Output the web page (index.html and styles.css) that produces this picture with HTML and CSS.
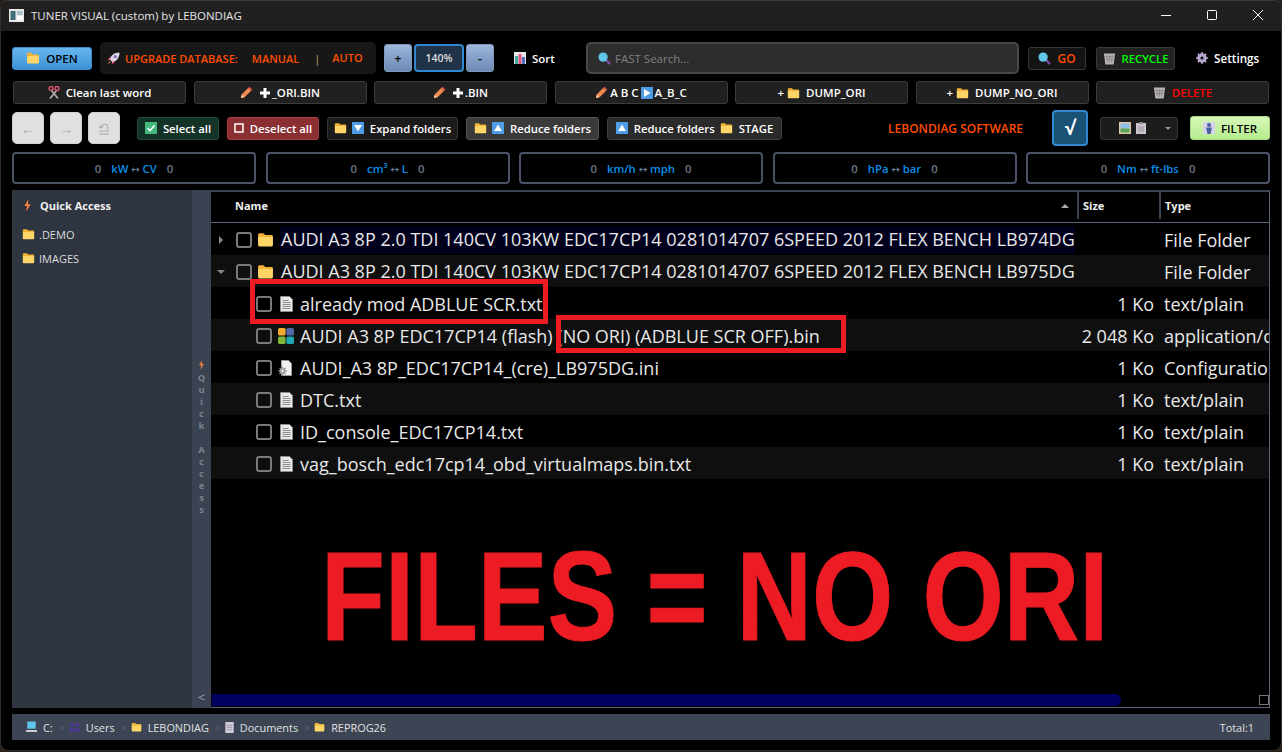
FILE: index.html
```html
<!DOCTYPE html>
<html lang="en">
  <head>
    <meta charset="utf-8" />
    <title>TUNER VISUAL (custom) by LEBONDIAG</title>
    <link rel="stylesheet" href="styles.css">
  </head>
  <body>
    <svg class="defs" width="0" height="0">
      <defs>
        <symbol id="folder" viewBox="0 0 16 14">
          <path d="M1 2.5C1 1.7 1.6 1 2.4 1h3.7l1.6 1.8h6c.7 0 1.3.6 1.3 1.3V5H1z" fill="#f2b233"/>
          <path d="M1 4.6h14v7.6c0 .7-.6 1.3-1.3 1.3H2.3c-.7 0-1.3-.6-1.3-1.3z" fill="#ffd568"/>
        </symbol>
        <symbol id="doc" viewBox="0 0 13 16">
          <path d="M.5 .5h9l3 3v12H.5z" fill="#e9e9e9" stroke="#8d8d8d"/>
          <path d="M2.500 4.500h6M2.500 6.500h8M2.500 8.500h8M2.500 10.500h8M2.500 12.500h8" stroke="#8d8d8d"/>
        </symbol>
        <symbol id="cfg" viewBox="0 0 14 16">
          <path d="M3.500 .5h7l3 3v12h-10z" fill="#f0f0f0" stroke="#999"/>
          <path d="M4.500 6.800v8.400M.3 11h8.400M1.500 8l6 6M7.500 8l-6 6" stroke="#8a8a8a" stroke-width="1.300"/>
          <circle cx="4.500" cy="11" r="2.800" fill="#a0a0a0"/>
          <circle cx="4.500" cy="11" r="1.200" fill="#eee"/>
        </symbol>
        <symbol id="blocks" viewBox="0 0 16 16">
          <rect x="0" y="0" width="7.600" height="7.600" rx="1.500" fill="#eeab2e"/>
          <rect x="8.400" y="0" width="7.600" height="7.600" rx="1.500" fill="#5268a8"/>
          <rect x="0" y="8.400" width="7.600" height="7.600" rx="1.500" fill="#7fb53c"/>
          <rect x="8.400" y="8.400" width="7.600" height="7.600" rx="1.500" fill="#21a9b3"/>
        </symbol>
        <symbol id="pencil" viewBox="0 0 14 14">
          <path d="M1 13l1-4 7-7 3 3-7 7z" fill="#ee8a4f"/>
          <path d="M9 2l1.300-1.300 3 3L12 5z" fill="#e2574c"/>
          <path d="M1 13l1-3.500L4.500 12z" fill="#f5d0a9"/>
        </symbol>
        <symbol id="plus" viewBox="0 0 12 12">
          <path d="M4.500 1h3v3.500H11v3H7.500V11h-3V7.500H1v-3h3.500z" fill="#fff"/>
        </symbol>
        <symbol id="bolt" viewBox="0 0 10 14">
          <path d="M6 0L1.500 7.500H4.500L3.500 14 8.500 5.500H5.500z" fill="#f0803c"/>
        </symbol>
        <symbol id="lens" viewBox="0 0 14 14">
          <path d="M8.500 8.500l4.500 4.500" stroke="#7d4aa0" stroke-width="2.500"/>
          <circle cx="5.500" cy="5.500" r="5" fill="#62c6ea"/>
        </symbol>
        <symbol id="bin" viewBox="0 0 14 14">
          <path d="M1 1.500h12l-1.500 12h-9z" fill="#b9b4b8"/>
          <path d="M4 3.500l1 8M7 3.500v8M10 3.500l-1 8M2.500 5h9M3 8h8" stroke="#7a767a" stroke-width=".7"/>
        </symbol>
        <symbol id="up" viewBox="0 0 12 12">
          <rect width="12" height="12" fill="#4e9be6"/>
          <path d="M6 2.500l4 6.500H2z" fill="#fff"/>
        </symbol>
        <symbol id="down" viewBox="0 0 12 12">
          <rect width="12" height="12" fill="#4e9be6"/>
          <path d="M6 9.500l4-6.500H2z" fill="#fff"/>
        </symbol>
      </defs>
    </svg>

    <div class="window">
      <header class="titlebar">
        <svg class="appicon" width="15" height="13" viewBox="0 0 15 13">
          <rect width="15" height="13" fill="#e8e8e8"/>
          <rect x="1.500" y="2" width="5" height="9" fill="#3d6f78"/>
          <rect x="8" y="2" width="5.500" height="4" fill="#a8c0c8"/>
          <rect x="8" y="7" width="5.500" height="4" fill="#fff"/>
        </svg>
        <span class="apptitle">TUNER VISUAL (custom) by LEBONDIAG</span>
        <div class="winctl">
          <svg width="12" height="12" viewBox="0 0 12 12"><path d="M1 6.500h10" stroke="#fff"/></svg>
          <svg width="12" height="12" viewBox="0 0 12 12"><rect x="1.500" y="1.500" width="9" height="9" rx="1" fill="none" stroke="#fff"/></svg>
          <svg width="12" height="12" viewBox="0 0 12 12"><path d="M1 1l10 10M11 1L1 11" stroke="#fff"/></svg>
        </div>
      </header>

      <div class="content">
        <div class="row row-one">
          <button class="btn btn-open"><svg class="ic" width="14" height="12"><use href="#folder"/></svg>OPEN</button>
          <div class="upgrade">
            <svg class="ic-rocket" width="13" height="13" viewBox="0 0 14 14">
              <path d="M13.500 .5C8 .5 4 3.500 3 8l3 3c4.500-1 7.500-5 7.500-10.500z" fill="#dcd8e4"/>
              <circle cx="9" cy="5" r="1.700" fill="#8c6fc0"/>
              <path d="M3.500 5L.5 9l3-.5zM9 10.500L5 13.500l.5-3z" fill="#e8487a"/>
              <path d="M.5 13.500l2.500-3.500 1 1z" fill="#f0803c"/>
            </svg>
            <span class="orange">UPGRADE DATABASE:</span>
            <span class="orange manual">MANUAL</span>
            <span class="pipe">|</span>
            <span class="orange auto">AUTO</span>
          </div>
          <div class="zoomgroup">
            <button class="btn-zoom">+</button>
            <span class="zoomval">140%</span>
            <button class="btn-zoom">-</button>
          </div>
          <div class="sortlabel">
            <svg class="ic" width="12" height="12" viewBox="0 0 12 12">
              <rect width="12" height="12" fill="#e8e8e8"/>
              <rect x="1" y="4" width="3" height="8" fill="#3fa79b"/>
              <rect x="4.500" y="2" width="3" height="10" fill="#e0527f"/>
              <rect x="8" y="5" width="3" height="7" fill="#4a6fc0"/>
            </svg>Sort
          </div>
          <div class="search">
            <svg class="ic" width="13" height="13"><use href="#lens"/></svg>FAST Search...
          </div>
          <button class="btn btn-go"><svg class="ic" width="13" height="13"><use href="#lens"/></svg><span class="orange">GO</span></button>
          <button class="btn btn-recycle"><svg class="ic" width="13" height="13"><use href="#bin"/></svg><span class="green">RECYCLE</span></button>
          <div class="settings">
            <svg class="ic" width="12" height="12" viewBox="0 0 12 12">
              <circle cx="6" cy="6" r="3.500" fill="none" stroke="#b9a9d0" stroke-width="2.500"/>
              <path d="M6 0v12M0 6h12M1.800 1.800l8.400 8.400M10.200 1.800l-8.400 8.400" stroke="#b9a9d0" stroke-width="1.500"/>
              <circle cx="6" cy="6" r="1.500" fill="#000"/>
            </svg>Settings
          </div>
        </div>

        <div class="row row-two">
          <button class="btn btn-wide">
            <svg class="ic" width="12" height="13" viewBox="0 0 12 13">
              <path d="M3 4l7 8.500M9 4L2 12.500" stroke="#b8b0b0" stroke-width="1.500"/>
              <circle cx="3" cy="2.500" r="2" fill="none" stroke="#d8566c" stroke-width="1.400"/>
              <circle cx="9" cy="2.500" r="2" fill="none" stroke="#d8566c" stroke-width="1.400"/>
            </svg>Clean last word
          </button>
          <button class="btn btn-wide"><svg class="ic" width="13" height="13"><use href="#pencil"/></svg><svg class="ic-plus" width="12" height="12"><use href="#plus"/></svg>_ORI.BIN</button>
          <button class="btn btn-wide"><svg class="ic" width="13" height="13"><use href="#pencil"/></svg><svg class="ic-plus" width="12" height="12"><use href="#plus"/></svg>.BIN</button>
          <button class="btn btn-wide tight">
            <svg width="13" height="13"><use href="#pencil"/></svg>A B C<svg width="12" height="12" viewBox="0 0 12 12"><rect width="12" height="12" fill="#4e9be6"/><path d="M3 2l6.500 4L3 10z" fill="#fff"/></svg>A_B_C
          </button>
          <button class="btn btn-wide"><span class="small-plus">+</span><svg class="ic" width="13" height="12"><use href="#folder"/></svg>DUMP_ORI</button>
          <button class="btn btn-wide"><span class="small-plus">+</span><svg class="ic" width="13" height="12"><use href="#folder"/></svg>DUMP_NO_ORI</button>
          <button class="btn btn-wide"><svg class="ic" width="13" height="13"><use href="#bin"/></svg><span class="red">DELETE</span></button>
        </div>

        <div class="row row-three">
          <div class="navgroup">
            <button class="btn-nav">&#8592;</button>
            <button class="btn-nav">&#8594;</button>
            <button class="btn-nav">
              <svg width="12" height="13" viewBox="0 0 12 13">
                <path d="M3 6a3.500 3.500 0 1 1 6.500 1.500M3 6L1 4M3 6l2-1.500" fill="none" stroke="#aaa" stroke-width="1.100"/>
                <path d="M1 9h10M1 12h10" stroke="#aaa" stroke-width="1.100"/>
              </svg>
            </button>
          </div>
          <button class="btn btn-select">
            <svg class="ic" width="12" height="12" viewBox="0 0 12 12"><rect width="12" height="12" fill="#42b87c"/><path d="M2.500 6l2.500 2.500 4.500-5" fill="none" stroke="#fff" stroke-width="1.600"/></svg>Select all
          </button>
          <button class="btn btn-deselect">
            <svg class="ic" width="10" height="10" viewBox="0 0 10 10"><rect x="1" y="1" width="8" height="8" fill="none" stroke="#fff" stroke-width="1.500"/></svg>Deselect all
          </button>
          <button class="btn btn-tool"><svg class="ic gap5" width="13" height="12"><use href="#folder"/></svg><svg class="ic" width="12" height="12"><use href="#down"/></svg>Expand folders</button>
          <button class="btn btn-tool active"><svg class="ic gap5" width="13" height="12"><use href="#folder"/></svg><svg class="ic" width="12" height="12"><use href="#up"/></svg>Reduce folders</button>
          <button class="btn btn-tool lighter"><svg class="ic" width="12" height="12"><use href="#up"/></svg>Reduce folders<svg class="ic ic-mid" width="13" height="12"><use href="#folder"/></svg>STAGE</button>
          <span class="brand orange">LEBONDIAG SOFTWARE</span>
          <button class="btn-check">&#8730;</button>
          <div class="combo">
            <svg width="12" height="12" viewBox="0 0 12 12"><rect width="12" height="12" fill="#d9c9a8"/><rect x="1.500" y="1.500" width="9" height="5" fill="#8cc0e8"/><rect x="1.500" y="6.500" width="9" height="4" fill="#5aa55a"/></svg>
            <svg width="10" height="12" viewBox="0 0 10 12"><rect y="1" width="10" height="11" fill="#cfc4d4"/><rect x="3" width="4" height="2" fill="#888"/><path d="M2 5h6M2 7h6M2 9h6" stroke="#999"/></svg>
            <span class="caret"></span>
          </div>
          <button class="btn-filter">
            <svg class="ic" width="12" height="12" viewBox="0 0 12 12"><rect width="12" height="12" fill="#d6d2ea"/><circle cx="6" cy="3" r="2" fill="#4a5fa0"/><path d="M3 5.500h6L7.500 12h-3z" fill="#4a5fa0"/></svg>FILTER
          </button>
        </div>

        <div class="row row-four">
          <div class="conv"><span>0</span><b>kW <i class="arr">&#8596;</i> CV</b><span>0</span></div>
          <div class="conv"><span>0</span><b>cm&#179; <i class="arr">&#8596;</i> L</b><span>0</span></div>
          <div class="conv"><span>0</span><b>km/h <i class="arr">&#8596;</i> mph</b><span>0</span></div>
          <div class="conv"><span>0</span><b>hPa <i class="arr">&#8596;</i> bar</b><span>0</span></div>
          <div class="conv"><span>0</span><b>Nm <i class="arr">&#8596;</i> ft-lbs</b><span>0</span></div>
        </div>

        <div class="main">
          <aside class="sidebar">
            <div class="side-title"><svg width="9" height="13"><use href="#bolt"/></svg>Quick Access</div>
            <div class="side-item"><svg width="13" height="12"><use href="#folder"/></svg>.DEMO</div>
            <div class="side-item"><svg width="13" height="12"><use href="#folder"/></svg>IMAGES</div>
          </aside>

          <div class="splitter">
            <svg width="7" height="10"><use href="#bolt"/></svg>
            <div class="vtext">
              <span>Q</span><span>u</span><span>i</span><span>c</span><span>k</span><span>&nbsp;</span>
              <span>A</span><span>c</span><span>c</span><span>e</span><span>s</span><span>s</span>
            </div>
            <div class="collapse">&lt;</div>
          </div>

          <section class="tree">
            <div class="tree-head">
              <div class="th th-name">Name<span class="sort-up"></span></div>
              <div class="th">Size</div>
              <div class="th">Type</div>
            </div>

            <div class="tree-row">
              <div class="cell-name">
                <span class="arrow arrow-right"></span><span class="check"></span>
                <svg width="17" height="15"><use href="#folder"/></svg>
                <span class="fname hovered">AUDI A3 8P 2.0 TDI 140CV 103KW EDC17CP14 0281014707 6SPEED 2012 FLEX BENCH LB974DG</span>
              </div>
              <div class="cell-size"></div>
              <div class="cell-type">File Folder</div>
            </div>
            <div class="tree-row alt">
              <div class="cell-name">
                <span class="arrow arrow-down"></span><span class="check"></span>
                <svg width="17" height="15"><use href="#folder"/></svg>
                <span class="fname">AUDI A3 8P 2.0 TDI 140CV 103KW EDC17CP14 0281014707 6SPEED 2012 FLEX BENCH LB975DG</span>
              </div>
              <div class="cell-size"></div>
              <div class="cell-type">File Folder</div>
            </div>
            <div class="tree-row">
              <div class="cell-name child">
                <span class="check"></span><svg class="i-doc" width="13" height="16"><use href="#doc"/></svg>
                <span>already mod ADBLUE SCR.txt</span>
              </div>
              <div class="cell-size">1 Ko</div>
              <div class="cell-type">text/plain</div>
            </div>
            <div class="tree-row alt">
              <div class="cell-name child">
                <span class="check"></span><svg class="i-blocks" width="16" height="16"><use href="#blocks"/></svg>
                <span>AUDI A3 8P EDC17CP14 (flash) (NO ORI) (ADBLUE SCR OFF).bin</span>
              </div>
              <div class="cell-size">2 048 Ko</div>
              <div class="cell-type">application/octet-stream</div>
            </div>
            <div class="tree-row">
              <div class="cell-name child">
                <span class="check"></span><svg class="i-cfg" width="14" height="16"><use href="#cfg"/></svg>
                <span>AUDI_A3 8P_EDC17CP14_(cre)_LB975DG.ini</span>
              </div>
              <div class="cell-size">1 Ko</div>
              <div class="cell-type">Configuration</div>
            </div>
            <div class="tree-row alt">
              <div class="cell-name child">
                <span class="check"></span><svg class="i-doc" width="13" height="16"><use href="#doc"/></svg>
                <span>DTC.txt</span>
              </div>
              <div class="cell-size">1 Ko</div>
              <div class="cell-type">text/plain</div>
            </div>
            <div class="tree-row">
              <div class="cell-name child">
                <span class="check"></span><svg class="i-doc" width="13" height="16"><use href="#doc"/></svg>
                <span>ID_console_EDC17CP14.txt</span>
              </div>
              <div class="cell-size">1 Ko</div>
              <div class="cell-type">text/plain</div>
            </div>
            <div class="tree-row alt">
              <div class="cell-name child">
                <span class="check"></span><svg class="i-doc" width="13" height="16"><use href="#doc"/></svg>
                <span>vag_bosch_edc17cp14_obd_virtualmaps.bin.txt</span>
              </div>
              <div class="cell-size">1 Ko</div>
              <div class="cell-type">text/plain</div>
            </div>

            <div class="mark mark-one"></div>
            <div class="mark mark-two"></div>
            <div class="bigtext">FILES = NO ORI</div>

            <div class="hscroll">
              <div class="hscroll-thumb"></div>
              <span class="hscroll-end"></span>
            </div>
          </section>
        </div>

        <footer class="statusbar">
          <span class="crumb">
            <svg width="11" height="12" viewBox="0 0 13 13"><rect x="1.500" width="10" height="8.500" fill="#5cc6ec"/><path d="M0 10h13v2.500H0z" fill="#c8ccd4"/></svg>C:
          </span>
          <i class="sep"></i>
          <span class="crumb">
            <svg width="11" height="10" viewBox="0 0 13 11"><circle cx="3.500" cy="3" r="2.500" fill="#4d3a8c"/><circle cx="9.500" cy="3" r="2.500" fill="#4d3a8c"/><path d="M0 11V7h6v4zM7 11V7h6v4z" fill="#4d3a8c"/></svg>Users
          </span>
          <i class="sep"></i>
          <span class="crumb"><svg width="11" height="10"><use href="#folder"/></svg>LEBONDIAG</span>
          <i class="sep"></i>
          <span class="crumb">
            <svg width="9" height="11" viewBox="0 0 10 13"><rect width="10" height="13" fill="#cfc8d8"/><path d="M2 4h6M2 6.500h6M2 9h6" stroke="#9a94a6"/></svg>Documents
          </span>
          <i class="sep"></i>
          <span class="crumb"><svg width="11" height="10"><use href="#folder"/></svg>REPROG26</span>
          <span class="total">Total:1</span>
        </footer>
      </div>
    </div>
  </body>
</html>
```

FILE: styles.css
```css
* {
  box-sizing: border-box;
}

html,
body {
  margin: 0;
  padding: 0;
  height: 752px;
  overflow: hidden;
  background-color: #2a2018;
}

body {
  font-family: "Open Sans", "Noto Sans", sans-serif;
  font-size: 12px;
  color: #fff;
}

svg {
  display: block;
  flex: none;
}

button {
  font-family: inherit;
  cursor: default;
}

.defs {
  position: absolute;
}

.window {
  height: 751px;
  background-color: #000;
  border-radius: 8px;
  border: 1px solid #2e2e2e;
  border-top-color: #3a3a3a;
  overflow: hidden;
  display: flex;
  flex-direction: column;
}

.titlebar {
  height: 30px;
  flex: none;
  background-color: #202020;
  display: flex;
  align-items: center;
  padding-left: 8px;
  padding-bottom: 2px;
}

.appicon {
  margin-right: 7px;
}

.apptitle {
  font-size: 11.5px;
  color: #e4e4e4;
}

.winctl {
  margin-left: auto;
  margin-right: 17px;
  display: flex;
  gap: 34px;
}

.content {
  flex: 1;
  padding: 11px 10px 10px 11px;
  display: flex;
  flex-direction: column;
}

.row {
  display: flex;
  align-items: center;
  flex: none;
}

.ic {
  margin-right: 6px;
}

.ic-mid {
  margin-left: 5px;
}

.ic-plus {
  margin-right: 1px;
}

.ic-rocket {
  margin-right: 5px;
}

.gap5 {
  margin-right: 5px;
}

.orange {
  color: #ff4d00;
}

.green {
  color: #00ff00;
}

.red {
  color: #ff0000;
}

.btn {
  height: 23px;
  display: flex;
  align-items: center;
  justify-content: center;
  padding: 0;
  font-size: 11.3px;
  font-weight: 600;
  color: #fff;
  background-color: #1c1c1c;
  border: 1px solid #353535;
  border-radius: 3px;
}

/* first toolbar row */
.row-one {
  height: 32px;
}

.btn-open {
  width: 80px;
  color: #000;
  background: linear-gradient(#67b7ee, #3d93d6);
  border-color: #3d8cc8;
  font-size: 11.5px;
}

.upgrade {
  width: 276px;
  height: 32px;
  margin-left: 8px;
  padding-left: 7px;
  display: flex;
  align-items: center;
  background-color: #171717;
  border-radius: 5px;
  font-weight: 600;
  font-size: 11px;
}

.manual {
  margin-left: 14px;
}

.pipe {
  margin-left: 15px;
  color: #a08a5a;
}

.auto {
  margin-left: 12px;
  position: relative;
  top: -1px;
}

.zoomgroup {
  margin-left: 8px;
  display: flex;
  gap: 2px;
}

.btn-zoom {
  width: 28px;
  height: 28px;
  padding: 0;
  font-size: 12px;
  font-weight: 600;
  color: #000;
  background: linear-gradient(#9db6dc, #6d8bb5);
  border: 1px solid #7f99be;
  border-radius: 3px;
}

.zoomval {
  width: 50px;
  height: 28px;
  display: flex;
  align-items: center;
  justify-content: center;
  font-size: 10.5px;
  font-weight: 600;
  color: #ddd;
  background-color: #1f3247;
  border: 2px solid #2f88cf;
  border-radius: 4px;
}

.sortlabel {
  width: 72px;
  margin-left: 20px;
  display: flex;
  align-items: center;
  font-weight: 600;
  font-size: 11.5px;
}

.search {
  width: 433px;
  height: 32px;
  padding-left: 10px;
  display: flex;
  align-items: center;
  font-size: 11.5px;
  color: #808080;
  background-color: #2d2d2d;
  border: 2px solid #484848;
  border-radius: 5px;
}

.search .ic {
  margin-right: 4px;
}

.btn-go {
  width: 58px;
  margin-left: 9px;
  font-size: 12px;
  background-color: #141414;
}

.btn-recycle {
  width: 79px;
  margin-left: 10px;
  background-color: #222;
  border-color: #3a3a3a;
}

.settings {
  margin-left: 21px;
  display: flex;
  align-items: center;
  font-weight: 600;
  font-size: 11.7px;
}

/* second toolbar row */
.row-two {
  margin-top: 7px;
  margin-left: 1px;
  gap: 7.5px;
}

.btn-wide {
  width: 173px;
  background-color: #202020;
  border-color: #3c3c3c;
  font-size: 11.5px;
}

.tight {
  gap: 2px;
}

.small-plus {
  margin-right: 3px;
}

/* third toolbar row */
.row-three {
  height: 36px;
  margin-top: 6px;
}

.navgroup {
  display: flex;
  gap: 6px;
  margin-right: 17px;
}

.btn-nav {
  width: 32px;
  height: 32px;
  padding: 0;
  display: flex;
  align-items: center;
  justify-content: center;
  font-size: 15px;
  color: #aaa;
  background-color: #e0e0e0;
  border: 1px solid #d0d0d0;
  border-radius: 5px;
}

.btn-select {
  width: 82px;
  background-color: #143226;
  border-color: #20503c;
}

.btn-deselect {
  width: 92px;
  margin-left: 8px;
  background-color: #8c2f33;
  border-color: #a83c40;
}

.btn-tool {
  margin-left: 8px;
  width: 131px;
  background-color: #1b1b1b;
}

.btn-tool.active {
  width: 133px;
  background-color: #3a3a3a;
  border-color: #555;
}

.btn-tool.lighter {
  width: 175px;
  background-color: #2a2a2a;
  border-color: #404040;
}

.brand {
  margin-left: 106px;
  width: 164px;
  font-weight: 600;
  font-size: 12px;
  white-space: nowrap;
}

.btn-check {
  width: 36px;
  height: 36px;
  padding: 0;
  font-size: 19px;
  font-weight: 700;
  color: #fff;
  background-color: #1a5276;
  border: 2px solid #2f88cf;
  border-radius: 4px;
}

.combo {
  width: 78px;
  height: 23px;
  margin-left: 12px;
  padding-left: 18px;
  display: flex;
  align-items: center;
  gap: 5px;
  background-color: #1c1c1c;
  border: 1px solid #353535;
  border-radius: 3px;
}

.caret {
  margin-left: 14px;
  border-left: 3.5px solid transparent;
  border-right: 3.5px solid transparent;
  border-top: 3.5px solid #999;
}

.btn-filter {
  width: 80px;
  height: 24px;
  margin-left: 12px;
  padding: 0;
  display: flex;
  align-items: center;
  justify-content: center;
  font-size: 11.5px;
  font-weight: 600;
  color: #000;
  background: linear-gradient(#d8f7b8, #b4ec8e);
  border: 1px solid #a8d888;
  border-radius: 3px;
}

/* converters */
.row-four {
  margin-top: 6px;
  gap: 9.5px;
}

.conv {
  width: 244px;
  height: 32px;
  display: flex;
  align-items: center;
  justify-content: center;
  gap: 10px;
  font-size: 11.3px;
  color: #6f7680;
  font-weight: 600;
  border: 2px solid #4a5366;
  border-radius: 4px;
}

.conv b {
  font-weight: 600;
  color: #0a8fe8;
}

.arr {
  font-family: "DejaVu Sans", sans-serif;
  font-style: normal;
  font-weight: 400;
  font-size: 10px;
  color: #6f8aa8;
}

/* main pane */
.main {
  height: 518px;
  margin-top: 6px;
  width: 1258px;
  display: flex;
  flex: none;
}

.sidebar {
  width: 180px;
  flex: none;
  padding: 8px 0 0 10px;
  background-color: #2e3440;
}

.side-title {
  display: flex;
  align-items: center;
  gap: 8px;
  font-size: 11px;
  font-weight: 700;
  color: #f0f0f0;
  height: 15px;
  margin-left: 1px;
}

.side-item {
  display: flex;
  align-items: center;
  gap: 4px;
  height: 24px;
  font-size: 11px;
  color: #dcdcdc;
  position: relative;
  top: 9px;
}

.splitter {
  width: 19px;
  flex: none;
  padding-top: 170px;
  display: flex;
  flex-direction: column;
  align-items: center;
  background-color: #3b4252;
}

.vtext {
  margin-top: 2px;
  display: flex;
  flex-direction: column;
  align-items: center;
  font-size: 9.5px;
  font-weight: 700;
  line-height: 12px;
  color: #7a8290;
}

.collapse {
  margin-top: auto;
  padding-bottom: 2px;
  font-size: 13px;
  color: #99a0ac;
}

.tree {
  flex: 1;
  position: relative;
  background-color: #000;
  border-right: 1px solid #5a6478;
  border-bottom: 1px solid #5a6478;
  border-top: 2px solid #3b4252;
  overflow: hidden;
}

.tree-head {
  height: 31px;
  display: grid;
  grid-template-columns: 866px 82px 1fr;
  padding-bottom: 3px;
  border-bottom: 1px solid #5a6478;
}

.th {
  display: flex;
  align-items: center;
  padding-left: 4px;
  font-size: 11px;
  font-weight: 700;
  color: #f0f0f0;
  border-left: 2px solid #3b4252;
}

.th-name {
  padding-left: 24px;
  border-left: 0;
  justify-content: space-between;
}

.sort-up {
  margin-right: 8px;
  border-left: 4px solid transparent;
  border-right: 4px solid transparent;
  border-bottom: 4px solid #aaa;
}

.tree-row {
  height: 32px;
  padding-top: 1px;
  display: grid;
  grid-template-columns: 866px 82px 1fr;
  font-size: 18px;
  color: #e8e8e8;
  white-space: nowrap;
  overflow: hidden;
}

.tree-row.alt {
  background-color: #0f0f0f;
}

.cell-name {
  display: flex;
  align-items: center;
  padding-left: 8px;
  overflow: hidden;
}

.cell-name.child {
  padding-left: 45px;
}

.arrow {
  width: 5px;
  height: 8px;
  margin-right: 12px;
  flex: none;
}

.arrow-right {
  border-left: 4px solid #888;
  border-top: 4px solid transparent;
  border-bottom: 4px solid transparent;
}

.arrow-down {
  width: 8px;
  height: 4px;
  margin-left: -2px;
  margin-right: 11px;
  border-top: 4px solid #888;
  border-left: 4px solid transparent;
  border-right: 4px solid transparent;
}

.check {
  width: 16px;
  height: 16px;
  flex: none;
  margin-right: 5px;
  border: 2px solid #7a7a7a;
  border-radius: 3px;
}

.child .check {
  margin-right: 6px;
}

.i-doc {
  margin: 0 7px 0 2px;
}

.i-blocks {
  margin-right: 6px;
}

.i-cfg {
  margin-right: 8px;
}

.fname {
  height: 28px;
  line-height: 26px;
  margin-left: 6px;
  padding-left: 1px;
}

.fname.hovered {
  background-color: #00001c;
}

.cell-size {
  padding-right: 5px;
  line-height: 32px;
  text-align: right;
}

.cell-type {
  padding-left: 5px;
  line-height: 32px;
  overflow: hidden;
}

/* red annotations drawn on top of the list */
.mark {
  position: absolute;
  border: 5px solid #ed1c24;
}

.mark-one {
  left: 39px;
  top: 87px;
  width: 298px;
  height: 45px;
}

.mark-two {
  left: 345px;
  top: 123px;
  width: 290px;
  height: 38px;
}

.bigtext {
  position: absolute;
  left: 110px;
  top: 342px;
  font-family: "Liberation Sans", Arial, sans-serif;
  font-size: 126px;
  line-height: 1;
  font-weight: 700;
  color: #ed1c24;
  -webkit-text-stroke: 1px #ed1c24;
  white-space: nowrap;
  transform-origin: left top;
  transform: scaleX(0.83);
}

.hscroll {
  position: absolute;
  left: 1px;
  right: 0;
  bottom: 0;
  height: 13px;
}

.hscroll-thumb {
  width: 909px;
  height: 12px;
  background-color: #000060;
  border-radius: 0 6px 6px 0;
}

.hscroll-end {
  position: absolute;
  right: 0;
  top: 1px;
  width: 10px;
  height: 10px;
  border: 1px solid #777;
}

/* breadcrumb bar */
.statusbar {
  height: 26px;
  margin-top: 6px;
  width: 1258px;
  flex: none;
  padding: 0 13px 0 14px;
  display: flex;
  align-items: center;
  gap: 6px;
  font-size: 10.9px;
  color: #e0e0e0;
  background-color: #3d4554;
}

.crumb {
  display: flex;
  align-items: center;
  gap: 6px;
}

.sep {
  width: 4px;
  height: 4px;
  margin: 2px 0 0 0;
  border-top: 1px solid #58606e;
  border-right: 1px solid #58606e;
  transform: rotate(45deg);
}

.total {
  margin-left: auto;
  margin-right: 3px;
}
```
